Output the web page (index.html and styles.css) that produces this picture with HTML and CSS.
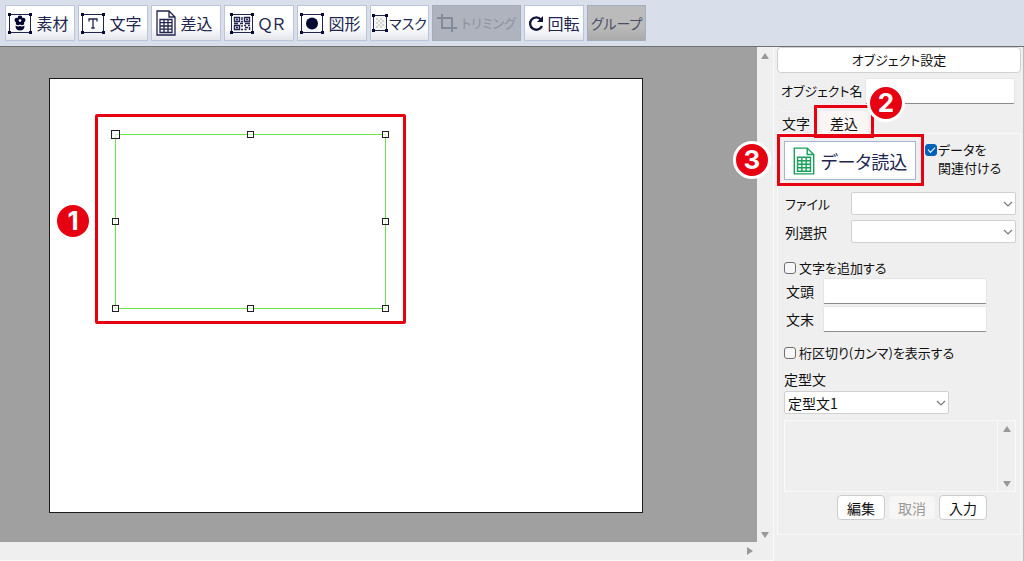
FILE: index.html
```html
<!DOCTYPE html>
<html lang="ja">
<head>
<meta charset="utf-8">
<meta name="viewport" content="width=device-width, initial-scale=1">
<title>オブジェクト設定</title>
<link rel="stylesheet" href="styles.css">
</head>
<body>
<svg class="defs" aria-hidden="true">
  <symbol id="frame" viewBox="0 0 24 21">
    <path d="M1.500 1.500H22.500V19.500H1.500Z" fill="none" stroke="#22254f" stroke-width="1"/>
    <path d="M0 0h3v3H0zM21 0h3v3h-3zM0 18h3v3H0zM21 18h3v3h-3z" fill="#060a33"/>
  </symbol>
  <symbol id="sheet" viewBox="0 0 20 26">
    <path d="M1 1H13L19 7V25H1Z M13 1V7H19" fill="none" stroke="currentColor" stroke-width="1.3"/>
    <path d="M4 9.500H16V22.500H4ZM4 12.700H16M4 16H16M4 19.200H16M8 9.500V22.500M12 9.500V22.500" fill="none" stroke="currentColor" stroke-width="1.3"/>
  </symbol>
  <symbol id="chevron" viewBox="0 0 10 6">
    <path d="M1 1L5 5L9 1" fill="none" stroke="#777" stroke-width="1.2"/>
  </symbol>
</svg>

<header class="toolbar">
  <button class="tool" type="button">
    <svg class="icon" viewBox="0 0 24 21"><use href="#frame"/><g fill="#060a33"><circle cx="12" cy="4.800" r="2.300"/><circle cx="8.800" cy="7" r="2.300"/><circle cx="15.200" cy="7" r="2.300"/><circle cx="10" cy="10" r="2.300"/><circle cx="14" cy="10" r="2.300"/><path d="M7.500 12.500Q10 14 12 13Q14 14 16.500 12.500Q16.500 17.500 12 17.500Q7.500 17.500 7.500 12.500Z"/></g><circle cx="12" cy="7.500" r="1.200" fill="#fff"/></svg>
    <span>素材</span>
  </button>
  <button class="tool" type="button">
    <svg class="icon" viewBox="0 0 24 21"><use href="#frame"/><path d="M8 8.500V6H16V8.500M12 6V15M10.300 15H13.700" fill="none" stroke="#22254f" stroke-width="1.300"/></svg>
    <span>文字</span>
  </button>
  <button class="tool" type="button">
    <svg class="icon-sheet"><use href="#sheet"/></svg>
    <span>差込</span>
  </button>
  <button class="tool" type="button">
    <svg class="icon" viewBox="0 0 24 21"><use href="#frame"/><path d="M4.500 4.500h5v4h-5zM14.500 4.500h5v4h-5zM4.500 12.500h5v4h-5zM6 6.500h2M16 6.500h2M6 14.500h2M12 4v3M11 8.500h2M4 10.500h4M10 10.500h3M15 10.500h5M12 12v2M11 16.500h2M14 12.500h2M18 12.500h2M15 14.500h3M19.500 14v3M14.500 16.500h2" fill="none" stroke="#22254f" stroke-width="1.400"/></svg>
    <span>ＱＲ</span>
  </button>
  <button class="tool" type="button">
    <svg class="icon" viewBox="0 0 24 21"><use href="#frame"/><circle cx="12" cy="10.500" r="6" fill="#060a33"/></svg>
    <span>図形</span>
  </button>
  <button class="tool tool-mask" type="button">
    <svg class="icon-mask" viewBox="0 0 16 18"><path d="M1.500 1.500H14.500V16.500H1.500Z" fill="#f4f4f2" stroke="#22254f"/><path d="M4 4h2v2H4zM8 4h2v2H8zM6 6h2v2H6zM10 6h2v2h-2zM4 8h2v2H4zM8 8h2v2H8zM6 10h2v2H6zM10 10h2v2h-2zM4 12h2v2H4zM8 12h2v2H8z" fill="#d4d4cf"/><path d="M0 0h3v3H0zM13 0h3v3h-3zM0 15h3v3H0zM13 15h3v3h-3z" fill="#060a33"/></svg>
    <span>マスク</span>
  </button>
  <button class="tool tool-trim" type="button" disabled>
    <svg class="icon-crop" viewBox="0 0 20 18"><path d="M0 4H15V18M5 0V14H20" fill="none" stroke="#858a9b" stroke-width="2"/></svg>
    <span>トリミング</span>
  </button>
  <button class="tool tool-rotate" type="button">
    <svg class="icon-rotate" viewBox="0 0 16 17"><path d="M13 4.500A6.200 6.200 0 1 0 14 11" fill="none" stroke="#111538" stroke-width="2.300"/><path d="M15 1V7H9Z" fill="#111538"/></svg>
    <span>回転</span>
  </button>
  <button class="tool tool-group" type="button"><span>グループ</span></button>
</header>

<div class="main">
  <main class="workspace">
    <div class="stage">
      <div class="paper">
        <div class="mark mark-object"></div>
        <svg class="selection" viewBox="0 0 271 174">
          <rect x="0.500" y="0.500" width="270" height="174" fill="none" stroke="#6be648"/>
          <g fill="#fff" fill-opacity="0.700" stroke="#222">
            <rect x="-3.500" y="-3.500" width="8" height="8"/><rect x="132.500" y="-2.500" width="6" height="6"/><rect x="267.500" y="-2.500" width="6" height="6"/>
            <rect x="-2.500" y="84.500" width="6" height="6"/><rect x="267.500" y="84.500" width="6" height="6"/>
            <rect x="-2.500" y="171.500" width="6" height="6"/><rect x="132.500" y="171.500" width="6" height="6"/><rect x="267.500" y="171.500" width="6" height="6"/>
          </g>
        </svg>
        <span class="badge badge-1">1</span>
      </div>
    </div>
    <div class="scroll-v"><i class="arrow arrow-up"></i><i class="arrow arrow-down"></i></div>
    <div class="scroll-h"><i class="arrow arrow-right"></i></div>
  </main>

  <aside class="panel">
    <button class="panel-title" type="button">オブジェクト設定</button>
    <div class="name-row">
      <label for="object-name">オブジェクト名</label>
      <input class="field" id="object-name" type="text">
    </div>
    <div class="tabs" role="tablist">
      <button class="tab" type="button" role="tab" aria-selected="false">文字</button>
      <div class="tab-wrap">
        <button class="tab tab-active" type="button" role="tab" aria-selected="true">差込</button>
        <div class="mark mark-tab"></div>
        <span class="badge badge-2">2</span>
      </div>
    </div>
    <section class="tab-panel">
      <div class="load-row">
        <div class="load-wrap">
          <button class="load" type="button"><svg class="load-icon"><use href="#sheet"/></svg><span>データ読込</span></button>
          <div class="mark mark-load"></div>
          <span class="badge badge-3">3</span>
        </div>
        <div class="link-data">
          <input class="check" id="link-data" type="checkbox" checked>
          <label class="link-label" for="link-data">データを<br>関連付ける</label>
        </div>
      </div>
      <div class="select-row">
        <label for="file">ファイル</label>
        <div class="select-wrap"><select class="select" id="file"><option></option></select><svg class="chevron"><use href="#chevron"/></svg></div>
      </div>
      <div class="select-row">
        <label class="kanji" for="column">列選択</label>
        <div class="select-wrap"><select class="select" id="column"><option></option></select><svg class="chevron"><use href="#chevron"/></svg></div>
      </div>
      <label class="check-row check-add"><input class="check" type="checkbox"><span>文字を追加する</span></label>
      <div class="text-row"><label class="kanji" for="prefix">文頭</label><input class="field" id="prefix" type="text"></div>
      <div class="text-row"><label class="kanji" for="suffix">文末</label><input class="field" id="suffix" type="text"></div>
      <label class="check-row check-comma"><input class="check" type="checkbox"><span>桁区切り(カンマ)を表示する</span></label>
      <label class="phrase-label kanji" for="phrase">定型文</label>
      <div class="select-wrap kanji"><select class="select" id="phrase"><option>定型文1</option></select><svg class="chevron"><use href="#chevron"/></svg></div>
      <div class="memo">
        <textarea class="memo-text" aria-label="定型文の内容" readonly></textarea>
        <div class="memo-scroll"><i class="arrow arrow-up"></i><i class="arrow arrow-down"></i></div>
      </div>
      <div class="actions kanji">
        <button class="action" type="button">編集</button>
        <button class="action" type="button" disabled>取消</button>
        <button class="action" type="button">入力</button>
      </div>
    </section>
  </aside>
</div>
</body>
</html>
```

FILE: styles.css
```css
* { box-sizing: border-box; }

body {
  margin: 0;
  min-height: 100vh;
  display: flex;
  flex-direction: column;
  background: #efefef;
  color: #111;
  font: 13px/16px "Noto Sans CJK JP", sans-serif;
  font-feature-settings: "palt";
}

button, input, select, textarea {
  font: inherit;
  font-feature-settings: inherit;
  color: inherit;
  margin: 0;
}

button { padding: 0; white-space: nowrap; }
label { white-space: nowrap; }
svg { display: block; flex: none; }
.kanji { font-size: 14px; }
.defs { position: absolute; width: 0; height: 0; }

/* Toolbar */
.toolbar {
  display: flex;
  gap: 3px;
  padding: 5px 4px 5px 5px;
  background: #d8deea;
  border-bottom: 1px solid #707070;
}

.tool {
  display: flex;
  align-items: center;
  justify-content: center;
  gap: 4px;
  width: 70px;
  height: 36px;
  padding-right: 3px;
  border: 1px solid #bcc4da;
  background: linear-gradient(#fff 60%, #e4e6ec);
  color: #22254f;
  font-size: 16px;
}

.tool-mask { width: 59px; padding: 0; gap: 1px; font-size: 14px; }
.tool-trim { width: 89px; padding: 0; background: #afb3bd; border-color: #a4acc0; color: #8c91a1; font-size: 13px; }
.tool-rotate { width: 60px; padding: 0; gap: 3px; }
.tool-group { width: 59px; padding: 0; background: linear-gradient(#bbb 60%, #aaa); border-color: #a4acc0; color: #4b4e68; font-size: 14px; }

.icon { width: 24px; height: 21px; }
.icon-sheet { width: 20px; height: 26px; }
.icon-mask { width: 16px; height: 18px; }
.icon-crop { width: 20px; height: 18px; }
.icon-rotate { width: 16px; height: 17px; }

/* Canvas area */
.main { flex: 1; display: flex; }

.workspace {
  flex: 1;
  min-width: 0;
  display: grid;
  grid-template-columns: minmax(0, 1fr) 16px;
  grid-template-rows: 1fr 18px;
  border-bottom: 1px solid #fafafa;
  border-right: 1px solid #fafafa;
}

.stage {
  padding: 31px 49px 29px;
  background: #a0a0a0;
  overflow: hidden;
}

.paper {
  position: relative;
  width: 594px;
  height: 435px;
  background: #fff;
  border: 1px solid #1a1a1a;
}

.selection {
  position: absolute;
  left: 65px;
  top: 55px;
  width: 271px;
  height: 174px;
  overflow: visible;
}

.mark {
  position: absolute;
  border: 3px solid #e60012;
  pointer-events: none;
}

.mark-object { left: 45px; top: 35px; width: 311px; height: 210px; border-radius: 2px; }

.badge {
  position: absolute;
  z-index: 2;
  width: 38px;
  height: 38px;
  border: 3px solid #fff;
  border-radius: 50%;
  background: #e60012;
  color: #fff;
  font: 700 26px/32px Inter, sans-serif;
  text-align: center;
}

.badge-1 { left: 4px; top: 123px; }

.scroll-v {
  display: flex;
  flex-direction: column;
  justify-content: space-between;
  align-items: center;
  padding: 6px 0 4px;
}

.scroll-h {
  display: flex;
  justify-content: flex-end;
  align-items: center;
  padding-right: 4px;
}

.arrow { width: 0; height: 0; border: 0 solid transparent; }
.arrow-up { border-width: 0 4px 6px; border-bottom-color: #999; }
.arrow-down { border-width: 6px 4px 0; border-top-color: #999; }
.arrow-right { border-width: 4px 0 4px 6px; border-left-color: #999; }

/* Settings panel */
.panel {
  flex: none;
  width: 250px;
  padding: 0 2px 0 3px;
  border-right: 1px solid #bbb;
}

.panel-title {
  display: block;
  width: 100%;
  height: 26px;
  border: 1px solid #d0d0d0;
  border-radius: 4px;
  background: #fff;
}

.name-row {
  display: flex;
  align-items: center;
  justify-content: space-between;
  padding: 5px 6px 7px 4px;
}

.name-row .field { width: 150px; }

.field {
  height: 26px;
  padding: 2px 4px;
  border: 1px solid #e6e6e6;
  border-bottom: 1px solid #8c8c8c;
  border-radius: 2px;
  background: #fff;
}

.tabs { display: flex; gap: 8px; height: 22px; padding-left: 3px; }

.tab {
  width: 32px;
  height: 22px;
  border: 1px solid #f4f4f4;
  border-width: 1px 0 0;
  background: #efefef;
  font-size: 14px;
}

.tab-wrap { position: relative; }
.tab-active { width: 48px; background: #faf6f5; }
.mark-tab { left: -6px; top: -6px; width: 60px; height: 33px; }
.badge-2 { left: 47px; top: -27px; }

.tab-panel {
  padding: 7px 4px 14px 6px;
  border: 1px solid #f9f9f9;
}

.load-row { display: flex; gap: 9px; margin-bottom: 12px; }
.load-wrap { position: relative; }

.load {
  display: flex;
  align-items: center;
  justify-content: center;
  gap: 6px;
  width: 132px;
  height: 39px;
  border: 1px solid #a9b4d4;
  background: #fff;
  color: #22254f;
  font-size: 18px;
}

.load-icon { width: 22px; height: 28px; color: #19a05a; }
.mark-load { left: -7px; top: -7px; width: 147px; height: 52px; }
.badge-3 { left: -51px; top: 0; }

.link-data {
  display: flex;
  align-items: flex-start;
  gap: 1px;
}

.link-label { line-height: 18px; }

.check {
  appearance: none;
  flex: none;
  position: relative;
  width: 12px;
  height: 12px;
  border: 1px solid #707070;
  border-radius: 3px;
  background: #f7f7f7;
}

.link-data .check { margin-top: 3px; }
.check:checked { border-color: #0063b8; background: #0063b8; }

.check:checked::after {
  content: "";
  position: absolute;
  left: 2px;
  top: 2px;
  width: 6px;
  height: 3px;
  border: solid #fff;
  border-width: 0 0 1px 1px;
  transform: rotate(-45deg);
}

.select-row {
  display: flex;
  align-items: center;
  justify-content: space-between;
  margin-bottom: 5px;
  padding-left: 1px;
}

.select-wrap { position: relative; width: 165px; }

.select {
  appearance: none;
  display: block;
  width: 100%;
  height: 23px;
  padding: 0 20px 0 3px;
  border: 1px solid #d0d0d0;
  border-radius: 2px;
  background: #fff;
}

.chevron {
  position: absolute;
  right: 3px;
  top: 9px;
  width: 10px;
  height: 6px;
  pointer-events: none;
}

.check-row { display: flex; align-items: center; gap: 3px; height: 16px; }
.check-add { margin-top: 17px; margin-bottom: 2px; }
.check-comma { margin-top: 13px; margin-bottom: 10px; }

.text-row {
  display: flex;
  align-items: center;
  gap: 9px;
  margin-bottom: 2px;
  padding-left: 2px;
}

.text-row .field { width: 164px; }
.phrase-label { display: block; margin-bottom: 4px; }

.memo {
  display: flex;
  height: 72px;
  margin-top: 6px;
  border: 1px solid #f9f9f9;
}

.memo-text {
  flex: 1;
  min-width: 0;
  border: 0;
  background: transparent;
  resize: none;
}

.memo-scroll {
  display: flex;
  flex-direction: column;
  align-items: center;
  justify-content: space-between;
  width: 18px;
  padding: 5px 0 4px;
  border-left: 1px solid #f9f9f9;
}

.actions {
  display: flex;
  justify-content: flex-end;
  gap: 3px;
  padding: 3px 29px 0 0;
}

.action {
  width: 48px;
  height: 25px;
  border: 1px solid #ccc;
  border-radius: 4px;
  background: #fff;
}

.action:disabled { border-color: #eee; background: #f8f5f5; color: #999; }
```
